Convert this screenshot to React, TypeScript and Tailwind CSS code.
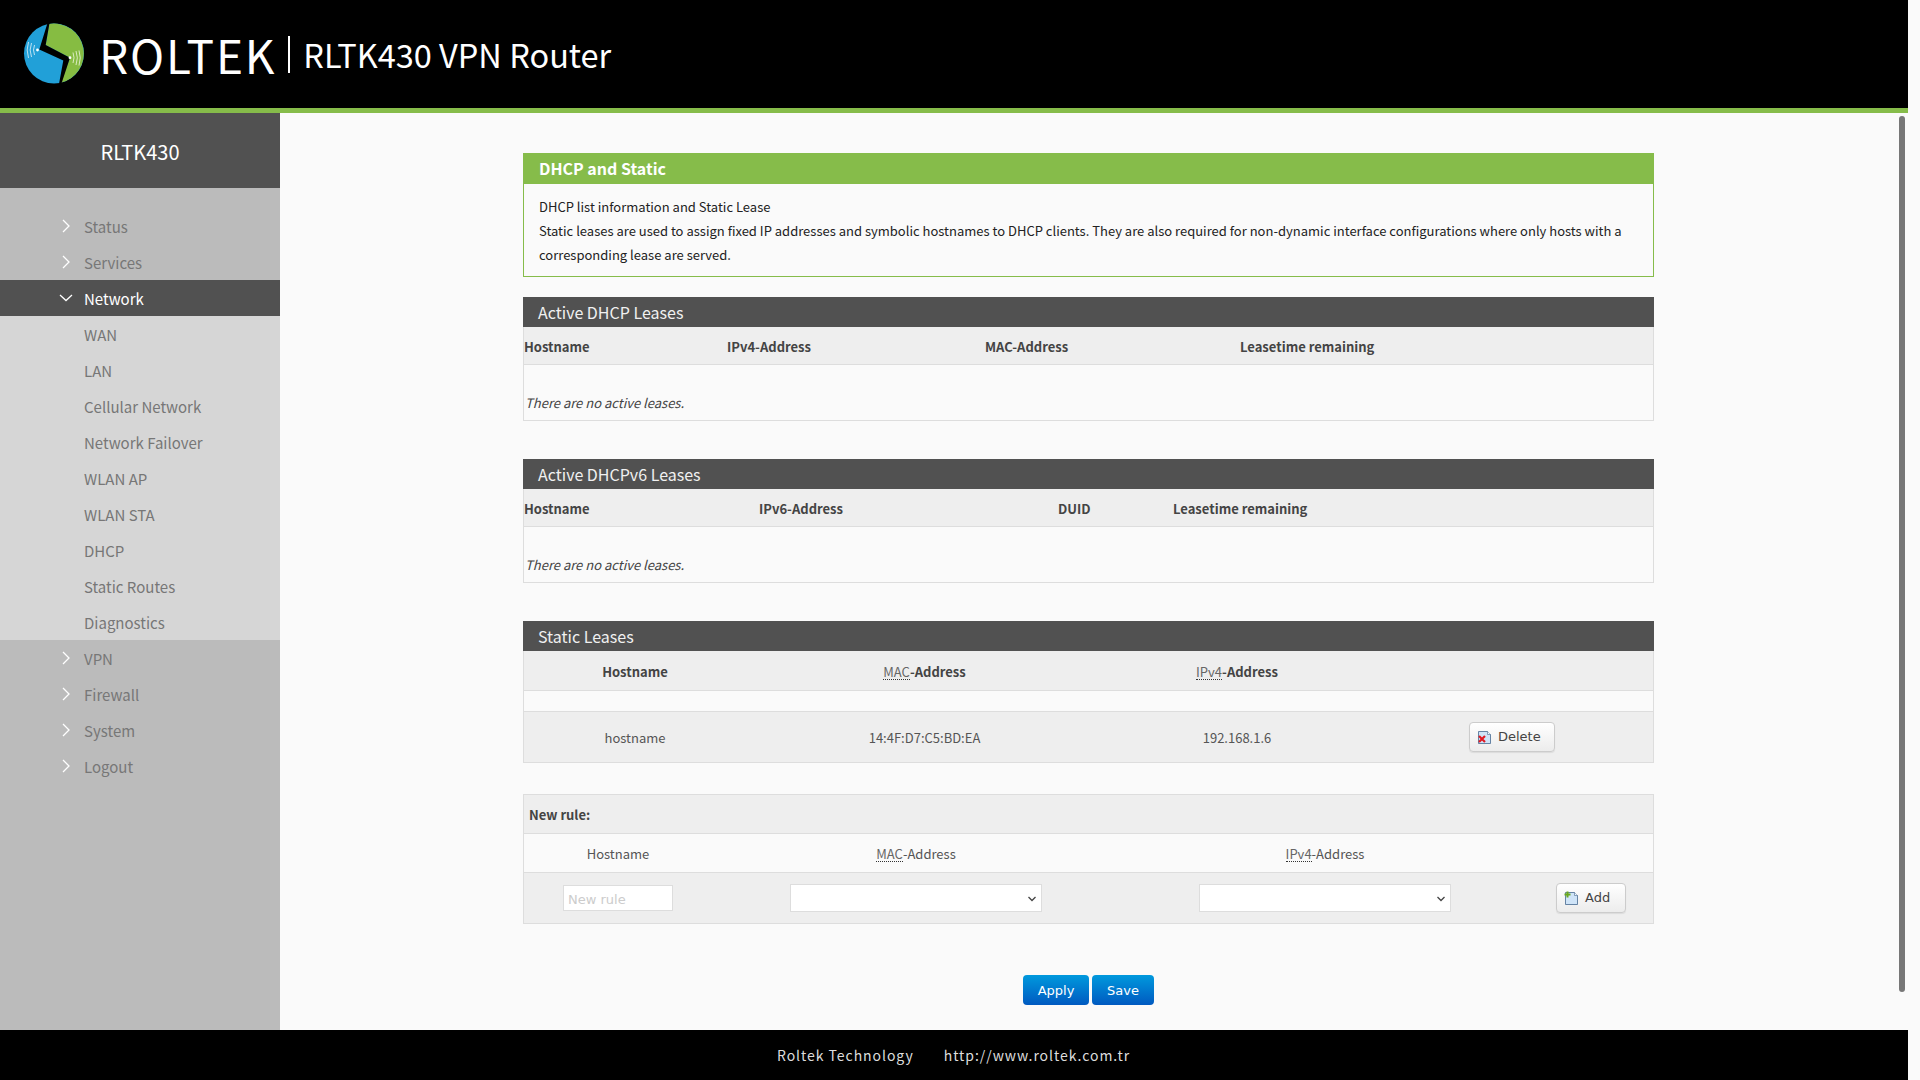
import React from "react";

const sans = "font-['Noto_Sans_CJK_SC','Noto_Sans',sans-serif]";
const dejavu = "font-['DejaVu_Sans',sans-serif]";

const Chevron = ({ open }: { open?: boolean }) =>
  open ? (
    <svg width="14" height="8" viewBox="0 0 14 8" className="ml-[59px] mr-[11px] shrink-0">
      <polyline points="1,1 7,6.5 13,1" fill="none" stroke="#fff" strokeWidth="1.3" />
    </svg>
  ) : (
    <svg width="8" height="14" viewBox="0 0 8 14" className="ml-[62px] mr-[14px] shrink-0">
      <polyline points="1,1 7,7 1,13" fill="none" stroke="#fff" strokeWidth="1.3" />
    </svg>
  );

const TopItem = ({ label, active }: { label: string; active?: boolean }) => (
  <div className={`flex items-center h-9 text-[15px] ${active ? "bg-[#515151] text-white" : "text-[#777]"}`}>
    <Chevron open={active} />
    <span className="pt-[2px]">{label}</span>
  </div>
);

const Logo = () => (
  <svg width="62" height="64" viewBox="13 12 62 64" className="ml-[23px] shrink-0">
    <circle cx="44" cy="43.5" r="30" fill="#21a0d8" />
    <path d="M39.3 13.9 A30 30 0 0 1 50.5 72.8 L60 47.7 L35.7 35 Z" fill="#86bc42" />
    <polygon points="37.5,13 29.3,39.5 53.3,50.5 48.8,75 51,75 60,47.7 35.7,35 39.5,13" fill="#000" />
    <circle cx="27.5" cy="40" r="1.4" fill="#fff" />
    <circle cx="60" cy="47.7" r="1.4" fill="#fff" />
    <g fill="none" stroke="#cfe9f5" strokeWidth="0.9">
      <path d="M24.5 35 Q22.5 40 24.5 45" />
      <path d="M21.5 33 Q18.8 40 21.5 47" />
      <path d="M18.5 32 Q15.8 40 18.5 48" />
    </g>
    <g fill="none" stroke="#e3f0cf" strokeWidth="0.9">
      <path d="M63 42.5 Q65 47.7 63 53" />
      <path d="M66 41 Q68.7 47.7 66 55" />
      <path d="M69 40.5 Q71.5 47.7 69 55.5" />
    </g>
  </svg>
);

const DocIcon = ({ kind }: { kind: "del" | "add" }) => (
  <svg width="15" height="15" viewBox="0 0 15 15" className="shrink-0">
    <path d="M1.5 1.5 H10.5 L13.5 4.5 V13.5 H1.5 Z" fill="#cfe4f8" stroke="#45688f" strokeWidth="0.8" />
    <path d="M10.5 1.5 V4.5 H13.5" fill="#f2f8fd" stroke="#45688f" strokeWidth="0.6" />
    {kind === "del" ? (
      <path d="M2 6 L8 12 M8 6 L2 12" stroke="#e01b24" strokeWidth="2.2" />
    ) : (
      <path d="M3.5 0.5 V6.5 M0.5 3.5 H6.5" stroke="#6aa820" strokeWidth="2" />
    )}
  </svg>
);

const SectionTitle = ({ children }: { children: React.ReactNode }) => (
  <div className="h-[30px] bg-[#515151] pl-[15px] text-base leading-[30px] text-[#f0f0f0]">{children}</div>
);

const Abbr = ({ children }: { children: React.ReactNode }) => (
  <span className="font-normal text-[#666] border-b border-dotted border-[#333] leading-[15px] inline-block">{children}</span>
);

const Select = () => (
  <div className="relative w-[252px] h-[28px]">
    <select className="appearance-none bg-white border border-[#ddd] outline-none w-full h-full" />
    <svg width="8" height="6" viewBox="0 0 8 6" className="absolute right-[6px] top-[12px] pointer-events-none">
      <polyline points="0.5,1 4,4.5 7.5,1" fill="none" stroke="#444" strokeWidth="1.3" />
    </svg>
  </div>
);

const LeaseTable = ({ title, cols, tmpl }: { title: string; cols: string[]; tmpl: string }) => (
  <div>
    <SectionTitle>{title}</SectionTitle>
    <div className={`grid ${tmpl} h-[38px] pt-[2px] items-center bg-[#eee] border-x border-b border-[#ddd] text-[13px] font-bold text-[#444]`}>
      {cols.map((c) => (
        <div key={c}>{c}</div>
      ))}
    </div>
    <div className="h-[56px] border-x border-b border-[#ddd] pl-px pt-[26px] text-[13px] leading-[24px] italic text-[#444]">
      There are no active leases.
    </div>
  </div>
);

export default function App() {
  return (
    <div className={`${sans} w-[1920px] h-[1080px] bg-[#fafafa] overflow-hidden relative`}>
      <div className="w-[1908px] h-full flex flex-col">
        {/* top bar */}
        <header className="h-[113px] shrink-0 bg-black border-b-[5px] border-[#86bc4a] flex items-center text-white">
          <Logo />
          <span className="ml-[14px] text-[46px] leading-none tracking-[1.8px]">ROLTEK</span>
          <span className="ml-[12px] w-[2px] h-[37px] bg-white" />
          <span className="ml-[13px] text-[32.5px] leading-none">RLTK430 VPN Router</span>
        </header>

        <div className="flex flex-1 min-h-0">
          {/* side menu */}
          <aside className="w-[280px] shrink-0 bg-[#bbb]">
            <div className="h-[75px] bg-[#515151] text-white text-[20px] leading-[77px] text-center">RLTK430</div>
            <nav className="pt-5">
              <TopItem label="Status" />
              <TopItem label="Services" />
              <TopItem label="Network" active />
              <div className="bg-[#d6d6d6] text-[#777] text-[15px]">
                {["WAN", "LAN", "Cellular Network", "Network Failover", "WLAN AP", "WLAN STA", "DHCP", "Static Routes", "Diagnostics"].map(
                  (m) => (
                    <div key={m} className="h-9 leading-[38px] pl-[84px]">
                      {m}
                    </div>
                  )
                )}
              </div>
              <TopItem label="VPN" />
              <TopItem label="Firewall" />
              <TopItem label="System" />
              <TopItem label="Logout" />
            </nav>
          </aside>

          {/* content */}
          <main className="flex-1 pl-[243px] pr-[254px] pt-10 flex flex-col">
            <div className="border border-[#86bc4a]">
              <div className="h-[30px] bg-[#86bc4a] pl-[15px] text-white text-base font-bold leading-[29px]">DHCP and Static</div>
              <div className="px-[15px] pt-[11px] pb-[9px] text-[13px] leading-[24px] text-[#222]">
                DHCP list information and Static Lease
                <br />
                Static leases are used to assign fixed IP addresses and symbolic hostnames to DHCP clients. They are also required for
                non-dynamic interface configurations where only hosts with a corresponding lease are served.
              </div>
            </div>

            <div className="mt-5">
              <LeaseTable
                title="Active DHCP Leases"
                tmpl="grid-cols-[203px_258px_255px_1fr]"
                cols={["Hostname", "IPv4-Address", "MAC-Address", "Leasetime remaining"]}
              />
            </div>
            <div className="mt-[38px]">
              <LeaseTable
                title="Active DHCPv6 Leases"
                tmpl="grid-cols-[235px_299px_115px_1fr]"
                cols={["Hostname", "IPv6-Address", "DUID", "Leasetime remaining"]}
              />
            </div>

            {/* static leases */}
            <div className="mt-[38px]">
              <SectionTitle>Static Leases</SectionTitle>
              <div className="border-x border-b border-[#ddd] text-[13px]">
                <div className="grid grid-cols-[222px_357px_268px_1fr] h-[40px] pt-[2px] border-b border-[#ddd] items-center text-center bg-[#eee] font-bold text-[#444]">
                  <div>Hostname</div>
                  <div>
                    <Abbr>MAC</Abbr>-Address
                  </div>
                  <div>
                    <Abbr>IPv4</Abbr>-Address
                  </div>
                  <div />
                </div>
                <div className="h-[21px] border-b border-[#ddd]" />
                <div className="grid grid-cols-[222px_357px_268px_1fr] h-[50px] items-center text-center bg-[#eee] text-[#555]">
                  <div className="pt-[2px]">hostname</div>
                  <div className="pt-[2px]">14:4F:D7:C5:BD:EA</div>
                  <div className="pt-[2px]">192.168.1.6</div>
                  <div className="flex justify-center">
                    <button className={`${dejavu} w-[86px] h-[30px] flex items-center pl-[7px] gap-[6px] text-[13px] text-[#444] bg-gradient-to-b from-white to-[#ececec] border border-[#ccc] rounded-[4px] shadow-[0_1px_1px_rgba(0,0,0,0.08)]`}>
                      <DocIcon kind="del" />
                      Delete
                    </button>
                  </div>
                </div>
              </div>
            </div>

            {/* new rule */}
            <div className="mt-[31px] border border-[#ddd] text-[13px]">
              <div className="h-[39px] bg-[#eee] border-b border-[#ddd] pl-[5px] font-bold leading-[40px] text-[#444]">New rule:</div>
              <div className="grid grid-cols-[188px_408px_410px_1fr] h-[39px] pt-px items-center text-center border-b border-[#ddd] text-[#555]">
                <div>Hostname</div>
                <div>
                  <Abbr>MAC</Abbr>-Address
                </div>
                <div>
                  <Abbr>IPv4</Abbr>-Address
                </div>
                <div />
              </div>
              <div className="grid grid-cols-[188px_408px_410px_1fr] h-[50px] items-center bg-[#eee]">
                <div className="flex justify-center">
                  <input
                    placeholder="New rule"
                    className={`${dejavu} bg-white border border-[#ddd] outline-none w-[110px] h-[26px] px-1 pt-[2px] text-[13px] placeholder:text-[#ccc]`}
                  />
                </div>
                <div className="flex justify-center">
                  <Select />
                </div>
                <div className="flex justify-center">
                  <Select />
                </div>
                <div className="flex justify-center pr-px">
                  <button className={`${dejavu} w-[70px] h-[30px] flex items-center pl-[7px] gap-[6px] text-[13px] text-[#444] bg-gradient-to-b from-white to-[#ececec] border border-[#ccc] rounded-[4px] shadow-[0_1px_1px_rgba(0,0,0,0.08)]`}>
                    <DocIcon kind="add" />
                    Add
                  </button>
                </div>
              </div>
            </div>

            <div className={`${dejavu} mt-[51px] flex justify-center gap-[3px] text-[13px] text-white`}>
              <button className="w-[66px] h-[30px] pt-px rounded-[4px] bg-gradient-to-b from-[#0099dd] to-[#0059c0]">Apply</button>
              <button className="w-[62px] h-[30px] pt-px rounded-[4px] bg-gradient-to-b from-[#0099dd] to-[#0059c0]">Save</button>
            </div>
          </main>
        </div>

        <footer className="h-[50px] shrink-0 bg-black flex items-center pl-[777px] gap-[30px] text-sm tracking-[0.95px] text-[#ddd]">
          <span>Roltek Technology</span>
          <span>http://www.roltek.com.tr</span>
        </footer>
      </div>
      {/* scrollbar thumb */}
      <div className="absolute left-[1899px] top-[116px] w-[6px] h-[876px] rounded-[3px] bg-[#777]" />
    </div>
  );
}
